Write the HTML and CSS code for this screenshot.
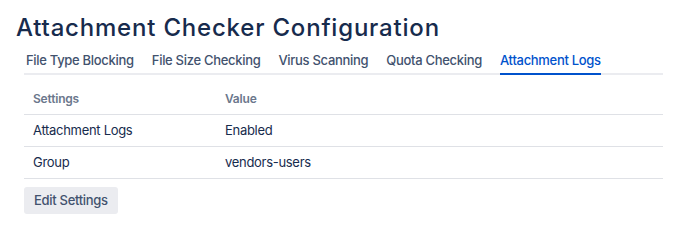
FILE: index.html
```html
<!DOCTYPE html>
<html>
<head>
<meta charset="utf-8">
<link rel="stylesheet" href="styles.css">
</head>
<body>
<div class="page">
  <h1 class="title">Attachment Checker Configuration</h1>
  <div class="content">
    <nav class="tabs">
      <a class="tab">File Type Blocking</a>
      <a class="tab">File Size Checking</a>
      <a class="tab">Virus Scanning</a>
      <a class="tab">Quota Checking</a>
      <a class="tab active">Attachment Logs</a>
    </nav>
    <table class="settings">
      <thead>
        <tr><th class="col1">Settings</th><th>Value</th></tr>
      </thead>
      <tbody>
        <tr><td>Attachment Logs</td><td>Enabled</td></tr>
        <tr><td>Group</td><td>vendors-users</td></tr>
      </tbody>
    </table>
    <button class="btn">Edit Settings</button>
  </div>
</div>
</body>
</html>
```
FILE: styles.css
```css
* { box-sizing: border-box; }
html, body { margin: 0; padding: 0; background: #fff; }
body {
  font-family: Inter, "Noto Sans", "Liberation Sans", sans-serif;
  color: #172B4D;
}
.page { padding: 12px 0 0 16px; width: 682px; }
.title {
  margin: 0;
  font-size: 24px;
  font-weight: 500;
  line-height: 32px;
  color: #172B4D;
  letter-spacing: 0.8px;
}
.content { padding-left: 8px; width: 647px; }
.tabs {
  display: flex;
  gap: 18px;
  border-bottom: 2px solid #EBECF0;
  padding: 0 0 0 2px;
}
.tab {
  font-size: 13px;
  font-weight: 500;
  letter-spacing: -0.3px;
  color: #42526E;
  line-height: 18px;
  padding: 7px 0 4px;
  margin-bottom: -2px;
  border-bottom: 2px solid transparent;
  white-space: nowrap;
}
.tab.active { color: #0052CC; border-bottom-color: #0052CC; }
.settings {
  width: 100%;
  border-collapse: collapse;
  margin-top: 12px;
}
.settings th {
  text-align: left;
  font-size: 12px;
  font-weight: 600;
  letter-spacing: -0.2px;
  color: #6B778C;
  padding: 5px 9px 8px;
  border-bottom: 1px solid #DFE1E6;
  line-height: 14px;
}
.settings th.col1, .settings td:first-child { width: 192px; }
.settings td {
  font-size: 13px;
  letter-spacing: -0.3px;
  color: #172B4D;
  padding: 7px 9px 8px;
  line-height: 16px;
  border-bottom: 1px solid #DFE1E6;
}
.btn {
  display: block;
  margin-top: 8px;
  font-family: inherit;
  font-size: 13px;
  font-weight: 500;
  letter-spacing: -0.3px;
  color: #42526E;
  background: #EBECF0;
  border: none;
  border-radius: 3px;
  height: 27px;
  padding: 0 10px;
  line-height: 27px;
}
```
